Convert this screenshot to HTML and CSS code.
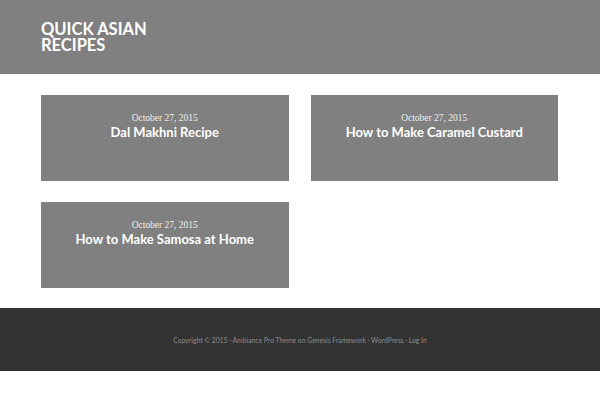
FILE: index.html
```html
<!DOCTYPE html>
<html>
<head>
<meta charset="utf-8">
<link rel="stylesheet" href="styles.css">
</head>
<body>
<header class="site-header">
  <h1 class="site-title">QUICK ASIAN<br>RECIPES</h1>
</header>
<main class="content">
  <article class="card">
    <p class="date">October 27, 2015</p>
    <h2 class="title">Dal Makhni Recipe</h2>
  </article>
  <article class="card">
    <p class="date">October 27, 2015</p>
    <h2 class="title">How to Make Caramel Custard</h2>
  </article>
  <article class="card">
    <p class="date">October 27, 2015</p>
    <h2 class="title">How to Make Samosa at Home</h2>
  </article>
</main>
<footer class="site-footer">
  <p>Copyright © 2015 · Ambiance Pro Theme on Genesis Framework · WordPress · Log In</p>
</footer>
</body>
</html>
```
FILE: styles.css
```css
html, body {
  margin: 0;
  padding: 0;
  background: #fff;
}
body {
  font-family: Lato, "Liberation Sans", sans-serif;
}
.site-header {
  background: #808080;
  height: 74px;
  box-sizing: border-box;
  padding: 21px 41px 0;
}
.site-title {
  margin: 0;
  color: #fff;
  font-size: 16.5px;
  line-height: 16px;
  font-weight: 700;
}
.content {
  display: grid;
  grid-template-columns: 1fr 1fr;
  column-gap: 22px;
  row-gap: 21px;
  width: 517px;
  padding: 21px 41px 20px;
}
.card {
  background: #808080;
  height: 86px;
  box-sizing: border-box;
  padding-top: 17px;
  text-align: center;
  color: #fff;
}
.date {
  margin: 0;
  font-family: "Liberation Serif", serif;
  font-size: 9.5px;
  line-height: 12px;
  color: #eeeeee;
}
.title {
  margin: 0;
  font-size: 13px;
  line-height: 17px;
  font-weight: 700;
}
.site-footer {
  background: #333;
  height: 63px;
  display: flex;
  align-items: center;
  justify-content: center;
}
.site-footer p {
  margin: 0;
  font-size: 6.8px;
  color: #8c8c8c;
}
```
